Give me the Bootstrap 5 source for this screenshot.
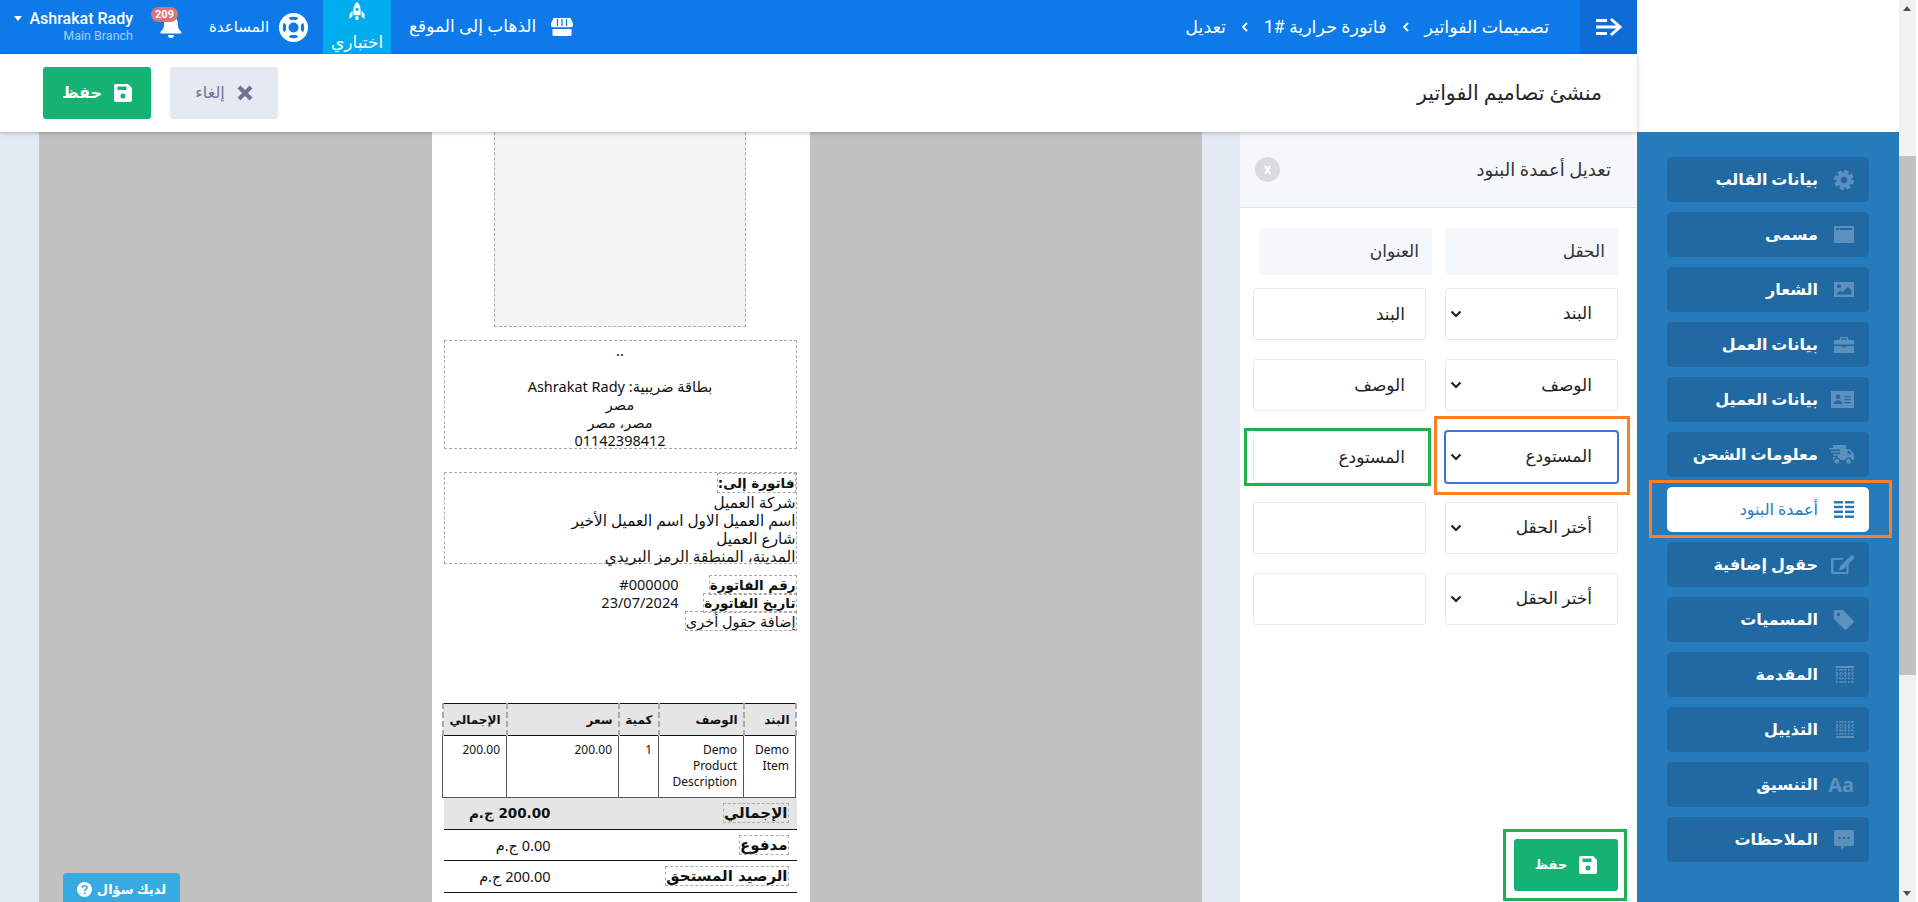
<!DOCTYPE html>
<html lang="ar" dir="rtl">
<head>
<meta charset="UTF-8" />
<title>منشئ تصاميم الفواتير</title>
<link href="https://cdn.jsdelivr.net/npm/bootstrap@5.3.0/dist/css/bootstrap.min.css" rel="stylesheet">
<script src="https://cdn.jsdelivr.net/npm/bootstrap@5.3.0/dist/js/bootstrap.bundle.min.js"></script>
<style>
  html, body { height: 902px; overflow: hidden; }
  body { font-family: Roboto, "Noto Sans", "DejaVu Sans", sans-serif; background: #fff; color: #222; }
  .page-wrap { height: 902px; }
  .main-col { width: 1637px; flex: none; }
  .side-col { width: 262px; flex: none; }
  .fake-scroll { width: 17px; margin-right: 2px; flex: none; background: #f1f1f1; position: relative; }
  .scroll-thumb { background: #c1c1c1; height: 519px; margin-top: 156px; }
  .scroll-up, .scroll-down { position: absolute; left: 4px; width: 0; height: 0; border-left: 4px solid transparent; border-right: 4px solid transparent; }
  .scroll-up { top: 6px; border-bottom: 5px solid #505050; }
  .scroll-down { bottom: 6px; border-top: 5px solid #505050; }

  .top-bar { height: 54px; background: #0e7ae9; color: #fff; font-size: 15px; }
  .toggle-box { width: 57px; height: 54px; background: #0d6cd6; }
  .crumbs { padding-right: 31px; gap: 16px; font-size: 17.5px; }
  .crumbs svg { width: 6px; height: 10px; }
  .site-link { margin-left: 18px; gap: 15px; font-size: 17px; }
  .test-box { width: 68px; height: 54px; background: #00aeef; margin-left: 15px; font-size: 17px; line-height: 18px; }
  .test-icon { margin-top: 2px; }
  .test-text { padding-top: 12px; }
  .help-link { gap: 10px; margin-left: 26px; font-size: 15px; }
  .bell-wrap { width: 32px; height: 54px; margin-left: 18px; }
  .bell-icon { position: absolute; left: 9px; top: 14px; }
  .bell-badge { position: absolute; top: 7px; left: 0; width: 27px; height: 15px; border-radius: 8px; background: #d9737a; font: 700 11px/15px Roboto, sans-serif; text-align: center; color: #fff; }
  .user-box { direction: ltr; width: 133px; text-align: right; font-family: Roboto, sans-serif; }
  .user-name { font-size: 16px; font-weight: 500; line-height: 18px; white-space: nowrap; }
  .user-branch { font-size: 12.5px; line-height: 16px; color: #a5cdf8; }
  .caret-down { display: inline-block; width: 0; height: 0; border-left: 4.5px solid transparent; border-right: 4.5px solid transparent; border-top: 5px solid #fff; margin-right: 7px; vertical-align: 3px; }

  .tool-bar { height: 78px; padding: 0 35px 0 43px; background: #fff; box-shadow: 0 1px 4px rgba(0,0,0,.25); position: relative; z-index: 2; }
  .tool-title { font-size: 20.5px; color: #26262b; }
  .tool-gap { gap: 19px; }
  .tool-btn { width: 108px; height: 52px; font-size: 16px; gap: 12px; border-radius: 3px; border: 0; }
  .btn-keep { background: #14b273; color: #fff; font-weight: 600; }
  .btn-keep:hover { background: #14b273; color: #fff; }
  .btn-drop { background: #e4e9f2; color: #6f7394; }
  .btn-drop:hover { background: #e4e9f2; color: #6f7394; }

  .work-area { height: 770px; background: #e3eaf3; }
  .field-panel { width: 397px; flex: none; background: #fff; }
  .panel-head { height: 76px; background: #f5f8fb; border-bottom: 1px solid #dbe5ef; padding: 0 26px 0 15px; font-size: 18px; color: #333; }
  .panel-x { width: 25px; height: 25px; border-radius: 50%; background: #d9dcdf; color: #fff; font: 700 14px/24px Roboto, sans-serif; text-align: center; }
  .field-body { padding: 20px 19px 0 0; }
  .head-row { gap: 13px; margin-bottom: 13px; }
  .head-cell { width: 173px; height: 47px; line-height: 47px; background: #f5f8fb; border-radius: 2px; padding: 0 13px; font-size: 17px; color: #333; }
  .field-row { gap: 19px; height: 52px; margin-bottom: 19.25px; }
  .field-select, .field-input { width: 173px; height: 52px; border: 1px solid #e6eaf2; border-radius: 3px; font-size: 17px; color: #222; }
  .field-select { padding: 0 25px 0 20px; background-image: url("data:image/svg+xml,%3csvg xmlns='http://www.w3.org/2000/svg' viewBox='0 0 12 12'%3e%3cpath fill='none' stroke='%23222' stroke-width='2.2' d='M1.500 3.500 6 8l4.500-4.500'/%3e%3c/svg%3e"); background-position: left 4px center; background-size: 12px 12px; }
  .field-input { padding: 0 20px; }
  .field-focus { border: 1px solid #3b74d4; box-shadow: 0 0 0 1px #3b74d4; }
  .field-cell { position: relative; width: 173px; flex: none; }
  .mark-orange, .mark-green { position: absolute; pointer-events: none; border: 3px solid; z-index: 3; }
  .mark-orange { border-color: #ff7f27; }
  .mark-green { border-color: #22b14c; }
  .mark-select { top: -15px; bottom: -12px; left: -11px; right: -12px; }
  .mark-input { top: -3px; bottom: -3px; left: -9px; right: -5px; }
  .mark-save { top: -10px; bottom: -10px; left: -11px; right: -9px; }
  .mark-side { top: -7px; bottom: -6px; left: -18px; right: -23px; }
  .panel-foot { padding: 0 19px 11px 0; }
  .foot-inner { position: relative; width: 104px; }
  .foot-inner .tool-btn { width: 104px; font-size: 13px; }

  .canvas-area { width: 1163px; flex: none; margin: 0 38px 0 39px; background: #c1c1c1; position: relative; overflow: hidden; }
  .paper { width: 378px; height: 770px; background: #fff; padding: 0 13px 0 12px; font-family: "Noto Sans", "DejaVu Sans", sans-serif; font-size: 14.5px; line-height: 18px; color: #111; }
  .logo-holder { width: 252px; height: 195px; margin: 0 auto 13px; background: #f4f4f4; border: 1px dashed #aaa; border-top: 0; }
  .company-box { height: 109px; border: 1px dashed #aaa; margin-bottom: 23px; text-align: center; white-space: nowrap; }
  .billto-box { height: 92px; border: 1px dashed #aaa; margin-bottom: 11px; white-space: nowrap; font-size: 15.3px; }
  .dash-tag { display: inline-block; border: 1px dashed #aaa; line-height: 18px; }
  .label-bold { font-size: 13.5px; font-weight: 700; font-family: "DejaVu Sans", sans-serif; }
  .meta-row { height: 18px; white-space: nowrap; }
  .meta-label { width: 118px; flex: none; }
  .meta-extra { margin-bottom: 72px; height: 20px; }
  .inv-table { width: 100%; border-collapse: collapse; font-size: 12px; line-height: 16px; table-layout: fixed; }
  .inv-table th { height: 32px; background: #e5e5e5; border: 2px dashed #aaa; border-top: 1px solid #111; border-bottom: 1px solid #111; padding: 0 5px; font-weight: 700; }
  .inv-table td { height: 62px; border: 1px solid #555; padding: 6px; vertical-align: top; }
  .col-a { width: 52px; }
  .col-b { width: 85px; }
  .col-c { width: 40px; }
  .col-d { width: 112px; }
  .col-e { width: 64px; }
  .sum-row { height: 31.5px; border-bottom: 1px solid #111; padding-right: 8px; }
  .sum-label { font-size: 15px; font-weight: 700; font-family: "DejaVu Sans", sans-serif; }
  .sum-gray { background: #e5e5e5; }
  .sum-bold { font-size: 13.5px; font-weight: 700; font-family: "DejaVu Sans", sans-serif; }
  .sum-value { width: 107px; flex: none; text-align: right; }
  .help-btn { position: absolute; left: 24px; bottom: -4px; width: 117px; height: 33px; background: #38aae2; color: #fff; font-size: 13px; font-weight: 600; border-radius: 4px 4px 0 0; gap: 5px; }

  .side-top { height: 132px; background: #fff; }
  .side-menu { height: 770px; background: #267bbd; padding: 25px 30px 0; gap: 10px; }
  .side-item { position: relative; height: 45px; background: #2069a2; color: #fff; border-radius: 5px; padding: 0 15px; font-size: 16px; font-weight: 600; text-decoration: none; }
  .side-item:hover { color: #fff; }
  .side-item svg { color: #5e90bd; }
  .side-icon { width: 36px; flex: none; display: flex; justify-content: flex-start; }
  .font-mark { color: #5e90bd; font: 700 20px/20px "Noto Sans", sans-serif; direction: ltr; }
  .side-active { background: #fff; color: #267bbd; font-weight: 500; }
  .side-active:hover { color: #267bbd; }
  .side-active svg { color: #267bbd; }
</style>
</head>
<body>
<div class="page-wrap d-flex">
  <div class="fake-scroll"><div class="scroll-up"></div><div class="scroll-thumb"></div><div class="scroll-down"></div></div>

  <div class="side-col d-flex flex-column">
    <div class="side-top"></div>
    <div class="side-menu d-flex flex-column">
      <a class="side-item d-flex align-items-center" href="#"><span class="side-icon"><svg width="20" height="20" viewBox="0 0 24 24" fill="none" stroke="currentColor"><circle cx="12" cy="12" r="6.5" stroke-width="5"/><circle cx="12" cy="12" r="10" stroke-width="4" stroke-dasharray="5 2.85"/></svg></span>بيانات القالب</a>
      <a class="side-item d-flex align-items-center" href="#"><span class="side-icon"><svg width="20" height="17" viewBox="0 0 20 17" fill="currentColor"><path d="M0 0h20v17H0zM2 2v2h3V2zm4 0v2h12V2z" fill-rule="evenodd"/></svg></span>مسمى</a>
      <a class="side-item d-flex align-items-center" href="#"><span class="side-icon"><svg width="20" height="15" viewBox="0 0 20 15" fill="currentColor"><path fill-rule="evenodd" d="M0 0h20v15H0zM5 2.200a2 2 0 1 0 0 4 2 2 0 0 0 0-4zM2.500 12.500h15V8.500l-3.500-3.700L8.500 10.400 6.500 8.500l-4 3z"/></svg></span>الشعار</a>
      <a class="side-item d-flex align-items-center" href="#"><span class="side-icon"><svg width="20" height="16" viewBox="0 0 20 16" fill="currentColor"><path d="M7 0h6a1.500 1.500 0 0 1 1.500 1.500V3H20v4.500H0V3h5.500V1.500A1.500 1.500 0 0 1 7 0zm0 1.500V3h6V1.500zM0 9h8v1.500h4V9h8v7H0z" fill-rule="evenodd"/></svg></span>بيانات العمل</a>
      <a class="side-item d-flex align-items-center" href="#"><span class="side-icon"><svg width="23" height="17" viewBox="0 0 23 17" fill="currentColor"><path fill-rule="evenodd" d="M0 0h23v17H0zM7 3.500a2.300 2.300 0 1 0 0 4.600 2.300 2.300 0 0 0 0-4.600zM3 13h8c0-2-1.500-3.700-4-3.700S3 11 3 13zM13.500 5v1.300H20V5zm0 3v1.300H20V8zm0 3v1.300H20V11z"/></svg></span>بيانات العميل</a>
      <a class="side-item d-flex align-items-center" href="#"><span class="side-icon"><svg width="25" height="20" viewBox="0 0 25 20" fill="currentColor"><path fill-rule="evenodd" d="M4 0h13v4h3.500L25 9v6h-2.200a3.300 3.300 0 0 0-6.500 0H11a3.300 3.300 0 0 0-6.500 0H4v-3h5v-1.500H4V9h7V7.500H2V6h9V4.500H0V3h4zM18.500 5.500v3.800h4.300L19.700 5.500z"/><circle cx="7.700" cy="16.300" r="2.400"/><circle cx="19.500" cy="16.300" r="2.400"/></svg></span>معلومات الشحن</a>
      <a class="side-item side-active d-flex align-items-center" href="#"><span class="side-icon"><svg width="20" height="17" viewBox="0 0 20 17" fill="currentColor"><path d="M0 0h9v2.500H0zM11 0h9v2.500h-9zM0 4.800h9v2.500H0zM11 4.800h9v2.500h-9zM0 9.600h9v2.500H0zM11 9.600h9v2.500h-9zM0 14.400h9V17H0zM11 14.400h9V17h-9z"/></svg></span>أعمدة البنود<span class="mark-orange mark-side"></span></a>
      <a class="side-item d-flex align-items-center" href="#"><span class="side-icon"><svg width="23" height="20" viewBox="0 0 23 20" fill="currentColor"><path d="M2 3h11l-2 2H2.500v12h13v-6l2-2v8.500a1.500 1.500 0 0 1-1.500 1.500H2a2 2 0 0 1-2-2V5a2 2 0 0 1 2-2zM19 1.500l3 3L12 14.500l-3.800.8.800-3.800zM19.800.6c.6-.6 1.500-.6 2 0l1 1c.6.600.6 1.400 0 2l-.8.800-3-3z"/></svg></span>حقول إضافية</a>
      <a class="side-item d-flex align-items-center" href="#"><span class="side-icon"><svg width="20" height="20" viewBox="0 0 20 20" fill="currentColor"><path fill-rule="evenodd" d="M0 1.500A1.500 1.500 0 0 1 1.500 0H9l10.500 10.500a1.500 1.500 0 0 1 0 2L12.500 19.500a1.500 1.500 0 0 1-2 0L0 9zM4.500 2.800a1.700 1.700 0 1 0 0 3.400 1.700 1.700 0 0 0 0-3.400z"/></svg></span>المسميات</a>
      <a class="side-item d-flex align-items-center" href="#"><span class="side-icon"><svg width="18" height="17" viewBox="0 0 18 17" fill="none" stroke="currentColor"><path d="M0 1h18" stroke-width="2"/><path d="M1 3v14M5 3v14M9 3v14M13 3v14M17 3v14M0 4h18M0 8h18M0 12h18M0 16h18" stroke-width="1.500" stroke-dasharray="1.500 1.500"/></svg></span>المقدمة</a>
      <a class="side-item d-flex align-items-center" href="#"><span class="side-icon"><svg width="18" height="17" viewBox="0 0 18 17" fill="none" stroke="currentColor"><path d="M0 16h18" stroke-width="2"/><path d="M1 0v14M5 0v14M9 0v14M13 0v14M17 0v14M0 1h18M0 5h18M0 9h18M0 13h18" stroke-width="1.500" stroke-dasharray="1.500 1.500"/></svg></span>التذييل</a>
      <a class="side-item d-flex align-items-center" href="#"><span class="side-icon"><span class="font-mark">Aa</span></span>التنسيق</a>
      <a class="side-item d-flex align-items-center" href="#"><span class="side-icon"><svg width="20" height="20" viewBox="0 0 20 20" fill="currentColor"><path fill-rule="evenodd" d="M2 0h16a2 2 0 0 1 2 2v12a2 2 0 0 1-2 2h-7l-4 4v-4H2a2 2 0 0 1-2-2V2a2 2 0 0 1 2-2zm3.500 6.800a1.200 1.200 0 1 0 0 2.400 1.200 1.200 0 0 0 0-2.400zm4.500 0a1.200 1.200 0 1 0 0 2.400 1.200 1.200 0 0 0 0-2.400zm4.500 0a1.200 1.200 0 1 0 0 2.400 1.200 1.200 0 0 0 0-2.400z"/></svg></span>الملاحظات</a>
    </div>
  </div>

  <div class="main-col d-flex flex-column">
    <div class="top-bar d-flex align-items-center justify-content-between">
      <div class="d-flex align-items-center">
        <div class="toggle-box d-flex align-items-center justify-content-center">
          <svg width="26" height="20" viewBox="0 0 26 20" fill="none" stroke="#fff" stroke-width="3"><path d="M0 3.500h11M0 10h22M0 16.500h11M15 2l9 8-9 8"/></svg>
        </div>
        <div class="crumbs d-flex align-items-center">
          <span>تصميمات الفواتير</span>
          <svg viewBox="0 0 6 10" fill="none" stroke="#fff" stroke-width="1.800"><path d="M5 1 1 5l4 4"/></svg>
          <span>فاتورة حرارية #1</span>
          <svg viewBox="0 0 6 10" fill="none" stroke="#fff" stroke-width="1.800"><path d="M5 1 1 5l4 4"/></svg>
          <span>تعديل</span>
        </div>
      </div>
      <div class="d-flex align-items-center">
        <a class="site-link d-flex align-items-center text-white text-decoration-none" href="#">
          <svg width="22" height="18" viewBox="0 0 22 18" fill="#fff"><path d="M2.500 0h17L22 5.500V7a2.200 2.200 0 0 1-2.200 2.200H2.200A2.200 2.200 0 0 1 0 7V5.500z"/><path d="M6.500 1v7M11 1v7M15.500 1v7" stroke="#0e7ae9" stroke-width="1.300"/><path d="M1.500 11h19v5.500A1.500 1.500 0 0 1 19 18H3a1.500 1.500 0 0 1-1.500-1.500z"/></svg>
          <span>الذهاب إلى الموقع</span>
        </a>
        <div class="test-box text-center">
          <svg class="test-icon d-block mx-auto" width="16" height="19" viewBox="0 0 17 20" fill="#fff"><path fill-rule="evenodd" d="M8.500 0C11 2 12.300 5 12.300 8.500V14H4.700V8.500C4.700 5 6 2 8.500 0zm0 6a1.700 1.700 0 1 0 0 3.400 1.700 1.700 0 0 0 0-3.400z"/><path d="M3.700 9 .5 13v5l3.200-3zM13.300 9l3.200 4v5l-3.200-3zM7 15h3v4H7z"/></svg>
          <div class="test-text">اختباري</div>
        </div>
        <a class="help-link d-flex align-items-center text-white text-decoration-none" href="#">
          <svg width="29" height="29" viewBox="0 0 30 30" fill="none"><circle cx="15" cy="15" r="15" fill="#fff"/><circle cx="15" cy="15" r="9.500" stroke="#0e7ae9" stroke-width="3.200"/><path d="M5 5l20 20M25 5 5 25" stroke="#fff" stroke-width="7"/><circle cx="15" cy="15" r="7.500" fill="#fff"/><circle cx="15" cy="15" r="5.200" fill="#0e7ae9"/></svg>
          <span>المساعدة</span>
        </a>
        <div class="bell-wrap position-relative">
          <svg class="bell-icon" width="22" height="26" viewBox="0 0 22 26" fill="#fff"><path d="M11 0a2 2 0 0 1 2 2v1c4 1 5 4 5 8 0 4 2 5 3.500 7 .4.700 0 1.500-1 1.500H1.500c-1 0-1.400-.8-1-1.500C2 16 4 15 4 11c0-4 1-7 5-8V2a2 2 0 0 1 2-2zM8 21h6a3 3 0 0 1-6 0z"/></svg>
          <span class="bell-badge">209</span>
        </div>
        <div class="user-box">
          <div class="user-name"><span class="caret-down"></span>Ashrakat Rady</div>
          <div class="user-branch">Main Branch</div>
        </div>
      </div>
    </div>

    <div class="tool-bar d-flex align-items-center justify-content-between">
      <div class="tool-title">منشئ تصاميم الفواتير</div>
      <div class="d-flex tool-gap">
        <button class="btn tool-btn btn-drop d-flex align-items-center justify-content-center" type="button"><svg width="16" height="16" viewBox="0 0 16 16" stroke="currentColor" stroke-width="4"><path d="M2 2l12 12M14 2 2 14"/></svg>إلغاء</button>
        <button class="btn tool-btn btn-keep d-flex align-items-center justify-content-center" type="button"><svg width="18" height="18" viewBox="0 0 18 18" fill="#fff"><path fill-rule="evenodd" d="M2 0h12l4 4v12a2 2 0 0 1-2 2H2a2 2 0 0 1-2-2V2a2 2 0 0 1 2-2zm1.500 2.500V6h9V2.500zM9 9.500a2.500 2.500 0 1 0 0 5 2.500 2.500 0 0 0 0-5z"/></svg>حفظ</button>
      </div>
    </div>

    <div class="work-area d-flex">
      <div class="field-panel d-flex flex-column">
        <div class="panel-head d-flex align-items-center justify-content-between">
          <span>تعديل أعمدة البنود</span>
          <span class="panel-x">x</span>
        </div>
        <div class="field-body flex-grow-1">
          <div class="head-row d-flex">
            <div class="head-cell">الحقل</div>
            <div class="head-cell">العنوان</div>
          </div>
          <div class="field-row d-flex">
            <div class="field-cell"><select class="form-select field-select"><option>البند</option></select></div>
            <div class="field-cell"><input class="form-control field-input" value="البند"></div>
          </div>
          <div class="field-row d-flex">
            <div class="field-cell"><select class="form-select field-select"><option>الوصف</option></select></div>
            <div class="field-cell"><input class="form-control field-input" value="الوصف"></div>
          </div>
          <div class="field-row d-flex">
            <div class="field-cell"><select class="form-select field-select field-focus"><option>المستودع</option></select><span class="mark-orange mark-select"></span></div>
            <div class="field-cell"><input class="form-control field-input" value="المستودع"><span class="mark-green mark-input"></span></div>
          </div>
          <div class="field-row d-flex">
            <div class="field-cell"><select class="form-select field-select"><option>أختر الحقل</option></select></div>
            <div class="field-cell"><input class="form-control field-input" value=""></div>
          </div>
          <div class="field-row d-flex">
            <div class="field-cell"><select class="form-select field-select"><option>أختر الحقل</option></select></div>
            <div class="field-cell"><input class="form-control field-input" value=""></div>
          </div>
        </div>
        <div class="panel-foot">
          <div class="foot-inner">
            <button class="btn tool-btn btn-keep d-flex align-items-center justify-content-center" type="button"><svg width="18" height="18" viewBox="0 0 18 18" fill="#fff"><path fill-rule="evenodd" d="M2 0h12l4 4v12a2 2 0 0 1-2 2H2a2 2 0 0 1-2-2V2a2 2 0 0 1 2-2zm1.500 2.500V6h9V2.500zM9 9.500a2.500 2.500 0 1 0 0 5 2.500 2.500 0 0 0 0-5z"/></svg>حفظ</button>
            <span class="mark-green mark-save"></span>
          </div>
        </div>
      </div>

      <div class="canvas-area d-flex justify-content-center">
        <div class="paper">
          <div class="logo-holder"></div>
          <div class="company-box">
            <div>..</div>
            <div>&nbsp;</div>
            <div>بطاقة ضريبية: Ashrakat Rady</div>
            <div>مصر</div>
            <div>مصر، مصر</div>
            <div>01142398412</div>
          </div>
          <div class="billto-box">
            <div class="label-bold dash-tag">فاتورة إلى:</div>
            <div>شركة العميل</div>
            <div>اسم العميل الاول اسم العميل الأخير</div>
            <div>شارع العميل</div>
            <div>المدينة، المنطقة الرمز البريدي</div>
          </div>
          <div class="meta-row d-flex"><div class="meta-label"><span class="dash-tag label-bold">رقم الفاتورة</span></div><div>#000000</div></div>
          <div class="meta-row d-flex"><div class="meta-label"><span class="dash-tag label-bold">تاريخ الفاتورة</span></div><div>23/07/2024</div></div>
          <div class="meta-extra"><span class="dash-tag">إضافة حقول أخرى</span></div>
          <table class="inv-table">
            <colgroup><col class="col-a"><col class="col-b"><col class="col-c"><col class="col-d"><col class="col-e"></colgroup>
            <thead><tr><th>البند</th><th>الوصف</th><th>كمية</th><th>سعر</th><th>الإجمالي</th></tr></thead>
            <tbody><tr><td>Demo Item</td><td>Demo Product Description</td><td>1</td><td>200.00</td><td>200.00</td></tr></tbody>
          </table>
          <div class="sum-row sum-gray d-flex align-items-center justify-content-between"><span class="dash-tag sum-label">الإجمالي</span><span class="sum-value sum-bold">200.00 ج.م</span></div>
          <div class="sum-row d-flex align-items-center justify-content-between"><span class="dash-tag sum-label">مدفوع</span><span class="sum-value">0.00 ج.م</span></div>
          <div class="sum-row d-flex align-items-center justify-content-between"><span class="dash-tag sum-label">الرصيد المستحق</span><span class="sum-value">200.00 ج.م</span></div>
        </div>
        <div class="help-btn d-flex align-items-center justify-content-center">
          <span>لديك سؤال</span>
          <svg width="15" height="15" viewBox="0 0 16 16"><circle cx="8" cy="8" r="8" fill="#fff"/><path d="M5.500 6.200C5.600 4.700 6.700 4 8 4c1.400 0 2.600.8 2.600 2.100 0 1.800-2.300 1.800-2.300 3.400" fill="none" stroke="#38aae2" stroke-width="1.800"/><circle cx="8.200" cy="12" r="1.100" fill="#38aae2"/></svg>
        </div>
      </div>
    </div>
  </div>
</div>
</body>
</html>
